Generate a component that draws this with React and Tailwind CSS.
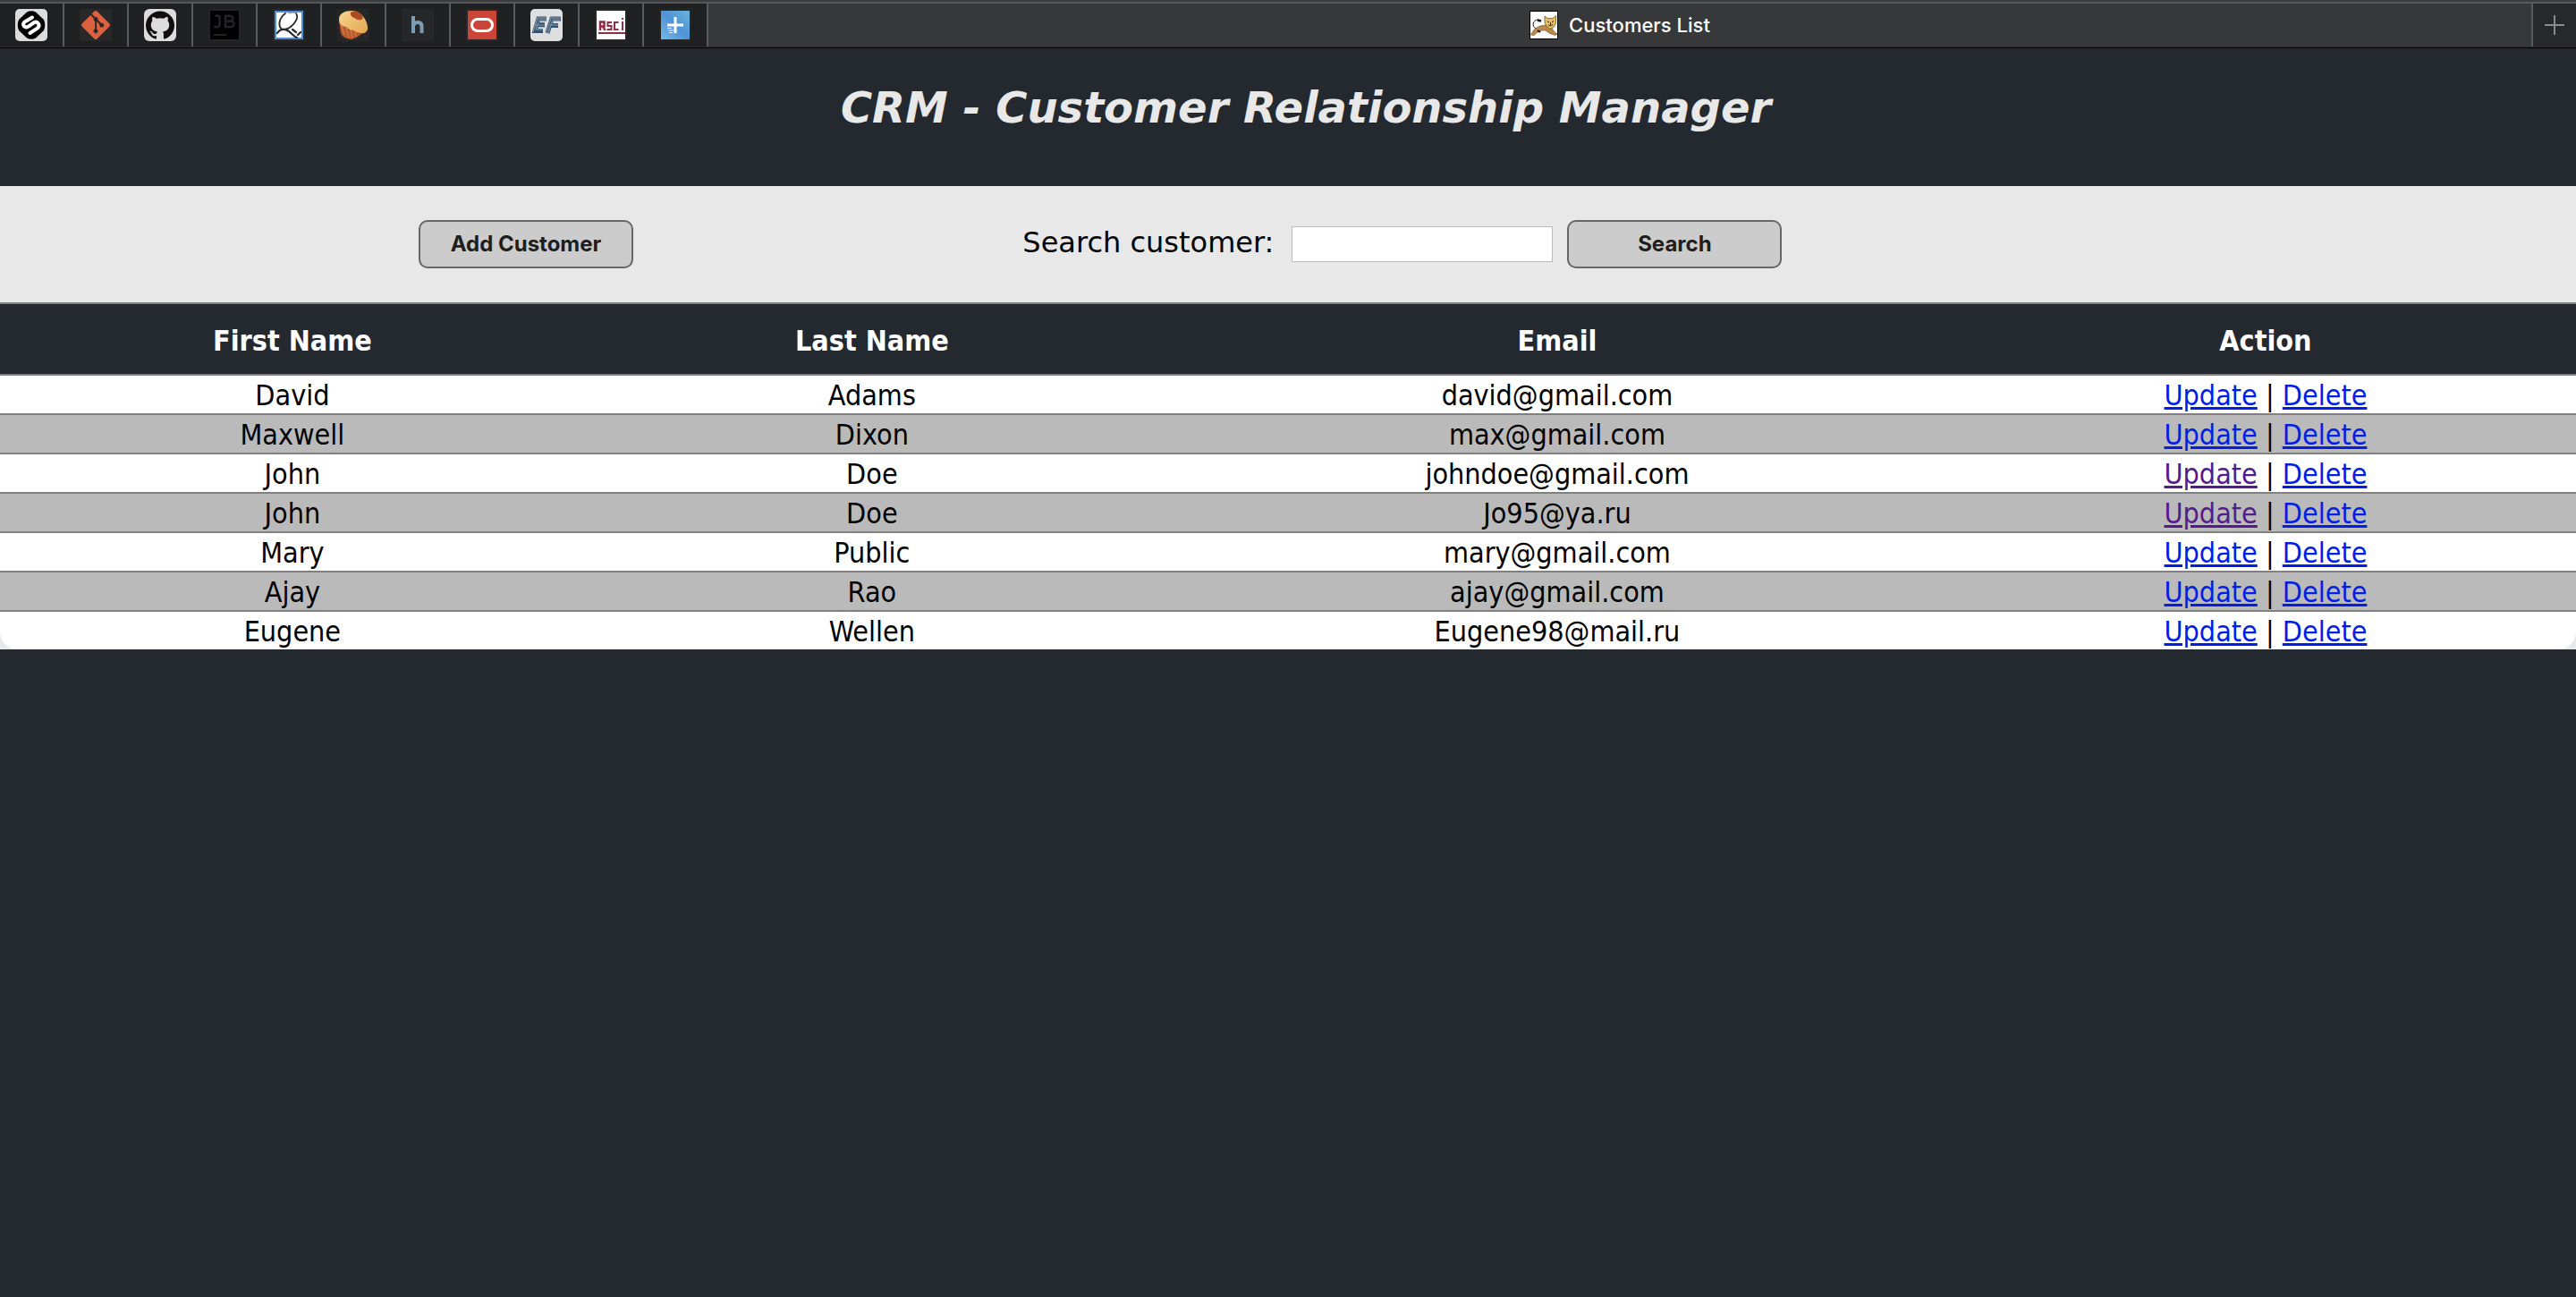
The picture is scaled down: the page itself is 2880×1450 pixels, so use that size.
import React from 'react';
import { SiGit, SiGithub } from 'react-icons/si';

const customers = [
  ['David', 'Adams', 'david@gmail.com', false],
  ['Maxwell', 'Dixon', 'max@gmail.com', false],
  ['John', 'Doe', 'johndoe@gmail.com', true],
  ['John', 'Doe', 'Jo95@ya.ru', true],
  ['Mary', 'Public', 'mary@gmail.com', false],
  ['Ajay', 'Rao', 'ajay@gmail.com', false],
  ['Eugene', 'Wellen', 'Eugene98@mail.ru', false],
];

function Stepik() {
  return (
    <svg viewBox="0 0 36 36" className="size-9">
      <rect width="36" height="36" rx="5" fill="#dcdcdc" />
      <path d="M13 3.500Q18 1 23 3.500L32 12Q34.500 18 32 24L23 32.500Q18 35 13 32.500L4 24Q1.500 18 4 12Z" fill="#000" />
      <path d="M19 9.500L10.500 14.500Q8 17 10 19.500Q12.500 21.500 15.500 19L20.500 15.500Q24 13.500 26 16.500Q27.500 19.500 25 21.500L16.500 27" fill="none" stroke="#fff" strokeWidth="4" strokeLinecap="round" />
    </svg>
  );
}

function Git() {
  return (
    <span className="flex size-9 items-center justify-center bg-[#282828]">
      <SiGit className="size-8 text-[#dd6141]" />
    </span>
  );
}

function Github() {
  return (
    <span className="flex size-9 items-center justify-center rounded-md bg-[#dcdcdc]">
      <SiGithub className="size-8 text-[#110d0d]" />
    </span>
  );
}

function JetBrains() {
  return (
    <svg viewBox="0 0 36 36" className="size-9">
      <rect width="36" height="36" fill="#242526" />
      <rect x="2" y="2" width="32" height="32" fill="#000" />
      <g fill="none" stroke="#222426" strokeWidth="2.500">
        <path d="M6 19.500Q12.500 22 12.500 17V7.500M7.500 7.800H12.500" />
        <path d="M19 7.800V20H24Q28.500 20 28.500 16.800T24 13.700H19H23.500Q27.500 13.700 27.500 10.800T23.500 7.800Z" />
        <path d="M6 29H20" strokeWidth="2" />
      </g>
    </svg>
  );
}

function Quill() {
  return (
    <svg viewBox="0 0 36 36" className="size-9">
      <rect width="36" height="36" fill="#28282a" />
      <rect x="3" y="3" width="30" height="30" fill="#fff" stroke="#4d8fd6" strokeWidth="2" />
      <g fill="none" stroke="#26292d" strokeWidth="1.800" strokeLinecap="round">
        <path d="M14 5C9 8 6 15 8 20C9 24 15 24 20 20C26 15 29 9 26 5" />
        <path d="M18 5Q22 3 26 5" stroke="#8a8f96" strokeWidth="1.200" />
        <path d="M5 27C8 22 14 22 18 25C21 27 23 31 27 32M22 23L26 26M28 29L31 26" strokeWidth="2.200" />
      </g>
    </svg>
  );
}

function Muffin() {
  return (
    <svg viewBox="0 0 36 36" className="size-9">
      <defs>
        <linearGradient id="muffinTop" x1="0" y1="0" x2="1" y2="1">
          <stop offset="0" stopColor="#f7d78f" />
          <stop offset="1" stopColor="#e3a552" />
        </linearGradient>
      </defs>
      <rect width="36" height="36" fill="#262626" />
      <path d="M2 14L4 27Q6 33 16 34Q23 32 28 27L22 20Z" fill="#b9592b" />
      <path d="M5 19L8 29M10 21L13 32M15 24L17 32M20 26L21 31" stroke="#cf7a42" strokeWidth="1.500" />
      <path d="M2 12C2 5 8 2 17 2C27 2 35 14 34 23Q32 28 27 27Q22 27 18 24Q14 24 10 20Q2 19 2 12Z" fill="url(#muffinTop)" />
      <path d="M15 4Q20 0 26 5Q31 10 27 12Q23 13 19 10Q14 8 15 4Z" fill="#ad4a23" />
    </svg>
  );
}

function Habr() {
  return (
    <svg viewBox="0 0 36 36" className="size-9">
      <rect width="36" height="36" fill="#262729" />
      <path d="M13 8V27M13 19Q14 15 18.500 15Q22.500 15 22.500 19.500V27" fill="none" stroke="#7d9bb3" strokeWidth="4" />
    </svg>
  );
}

function Oracle() {
  return (
    <svg viewBox="0 0 36 36" className="size-9">
      <rect width="36" height="36" fill="#282828" />
      <rect x="2" y="2" width="32" height="32" fill="#cb4438" />
      <rect x="6.500" y="11.500" width="23" height="13" rx="6.500" fill="none" stroke="#fff" strokeWidth="3" />
    </svg>
  );
}

function EnglishFirst() {
  return (
    <svg viewBox="0 0 36 36" className="size-9">
      <rect width="36" height="36" rx="5" fill="#dedede" />
      <g fill="none" stroke="#35506b" strokeWidth="5">
        <path d="M18 11H9L5 24.500H14M7 17.800H16" />
        <path d="M34 11H24L19 27M22 18.500H31" />
      </g>
      <g fill="none" stroke="#8da0b1" strokeWidth="1">
        <path d="M18 10H8L3 26M18 12H10L6 23H14M6 18H16M34 10H23L18 27M33 12H25L20 27M22 18H31" />
      </g>
    </svg>
  );
}

function Rsci() {
  return (
    <svg viewBox="0 0 36 36" className="size-9">
      <rect width="36" height="36" fill="#262626" />
      <rect x="2" y="2" width="32" height="32" fill="#fff" />
      <g fill="none" stroke="#8c2f48" strokeWidth="2">
        <path d="M6 24V14.500H10.500V19.500H6M9 19.500L11.500 24" strokeWidth="2.500" />
        <path d="M19 15H14.500V19H18.500V23H13.500M26.500 15H22V23H26.500M31 14V24M31 10V12" />
        <path d="M4 27H34" />
      </g>
    </svg>
  );
}

function PlusSquare() {
  return (
    <svg viewBox="0 0 36 36" className="size-9">
      <defs>
        <linearGradient id="plusSky" x1="0" y1="1" x2="1" y2="0">
          <stop offset="0" stopColor="#74bbea" />
          <stop offset=".5" stopColor="#5093d6" />
          <stop offset="1" stopColor="#68b4d8" />
        </linearGradient>
      </defs>
      <rect width="36" height="36" fill="#262626" />
      <rect x="2" y="2" width="32" height="32" fill="url(#plusSky)" />
      <path d="M18 9V27M9 18H27" stroke="#fff" strokeWidth="3" />
      <path d="M9 21.500H14M10 24H16M11 26.500H15" stroke="#e4f1fb" strokeWidth="1.200" />
    </svg>
  );
}

function Tomcat() {
  return (
    <svg viewBox="0 0 32 32" className="size-8">
      <rect x=".5" y=".5" width="31" height="31" fill="#fff" stroke="#000" />
      <path d="M12 20Q4 21 4 15Q5 10 10 10" fill="none" stroke="#222" />
      <path d="M9 10.500L13 11.500" stroke="#111" strokeWidth="2.500" />
      <path d="M1.500 27Q5 19 12 17L18 16L25 19Q26 23 31 26L29 27.500Q22 26 18 22Q11 21 5 27.500Z" fill="#b98a45" stroke="#5e4520" strokeWidth=".6" />
      <path d="M9 22L12 24" stroke="#111" strokeWidth="2" />
      <path d="M17 6L20 8.500H26L29.500 5.500V14Q28 19 23 20.500Q18 18 17 13Z" fill="#e6bf62" stroke="#5e4520" strokeWidth=".7" />
      <path d="M20 12L22 13M27 11.500L25 13M21 16Q23 18 26 15.500M23.500 13V16" fill="none" stroke="#2d2412" />
    </svg>
  );
}

const pinned = [
  ['Stepik', Stepik],
  ['Git', Git],
  ['GitHub', Github],
  ['JetBrains', JetBrains],
  ['Quill', Quill],
  ['Muffin', Muffin],
  ['Habr', Habr],
  ['Oracle', Oracle],
  ['EF', EnglishFirst],
  ['RSCI', Rsci],
  ['Plus', PlusSquare],
];

function TabBar() {
  return (
    <nav className="flex h-[54px] border-t-2 border-b border-t-[#3b3c3e] border-b-black bg-[#37383a]">
      <div className="flex flex-1 border-t-2 border-b border-t-[#58595b] border-b-[#2c2d2f]">
        {pinned.map(([name, Icon]) => (
          <button key={name} aria-label={name} className="flex w-18 items-center justify-end border-r-2 border-[#5a5b5d] bg-[#1e2021] pr-[17px]">
            <Icon />
          </button>
        ))}
        <button className="flex flex-1 items-center justify-center gap-3 font-['Inter',sans-serif] text-[22px] font-medium text-white">
          <Tomcat />
          Customers List
        </button>
        <button aria-label="New tab" className="flex w-[50px] items-center justify-center border-l-2 border-[#5a5b5d] bg-[#27282a]">
          <svg viewBox="0 0 22 22" className="size-[22px]">
            <path d="M11 0V22M0 11H22" stroke="#8a8b8c" strokeWidth="2" />
          </svg>
        </button>
      </div>
    </nav>
  );
}

const buttonClass =
  "h-[54px] w-60 rounded-[10px] border-2 border-[#666] bg-[#ccc] font-['Inter',sans-serif] text-2xl font-bold text-[#1e1e1e]";

export default function App() {
  return (
    <div className="min-h-screen bg-[#24282f] font-['DejaVu_Sans',sans-serif] text-black">
      <TabBar />
      <header className="pt-[34px] pr-10 pb-14 pl-20 text-center">
        <h1 className="text-5xl leading-16 font-bold text-[#e8e8e8] italic">CRM - Customer Relationship Manager</h1>
      </header>
      <main className="bg-[#e8e8e8]">
        <div className="flex h-[130px] items-center">
          <div className="w-[39.7%] pl-[468px]">
            <button className={buttonClass}>Add Customer</button>
          </div>
          <form className="flex items-center gap-4" onSubmit={(e) => e.preventDefault()}>
            <label htmlFor="search" className="pr-1 pb-1 text-[32px] leading-10">Search customer:</label>
            <input id="search" type="text" className="h-10 w-[292px] border border-[#bbb] bg-white px-2 text-2xl" />
            <button className={buttonClass}>Search</button>
          </form>
        </div>
        <table className="w-full table-fixed overflow-hidden rounded-b-[20px] text-center font-['DejaVu_Sans_Condensed','DejaVu_Sans',sans-serif] text-[32px]">
          <thead>
            <tr className="bg-[#24282f] text-white">
              <th className="h-20 w-[22.7%] border-y-2 border-[#808080] pt-1">First Name</th>
              <th className="w-[22.3%] border-y-2 border-[#808080] pt-1">Last Name</th>
              <th className="w-[30.9%] border-y-2 border-[#808080] pt-1">Email</th>
              <th className="w-[24.1%] border-y-2 border-[#808080] pt-1">Action</th>
            </tr>
          </thead>
          <tbody className="leading-10">
            {customers.map(([first, last, email, visited]) => (
              <tr key={email} className="border-b-2 border-[#808080] bg-white last:border-b-0 even:bg-[#bababa]">
                <td className="pt-0.5">{first}</td>
                <td className="pt-0.5">{last}</td>
                <td className="pt-0.5">{email}</td>
                <td className="pt-0.5">
                  <a href="#update" className={visited ? 'text-[#551a8b] underline' : 'text-[#001ee6] underline'}>Update</a>
                  {' | '}
                  <a href="#delete" className="text-[#001ee6] underline">Delete</a>
                </td>
              </tr>
            ))}
          </tbody>
        </table>
      </main>
    </div>
  );
}
